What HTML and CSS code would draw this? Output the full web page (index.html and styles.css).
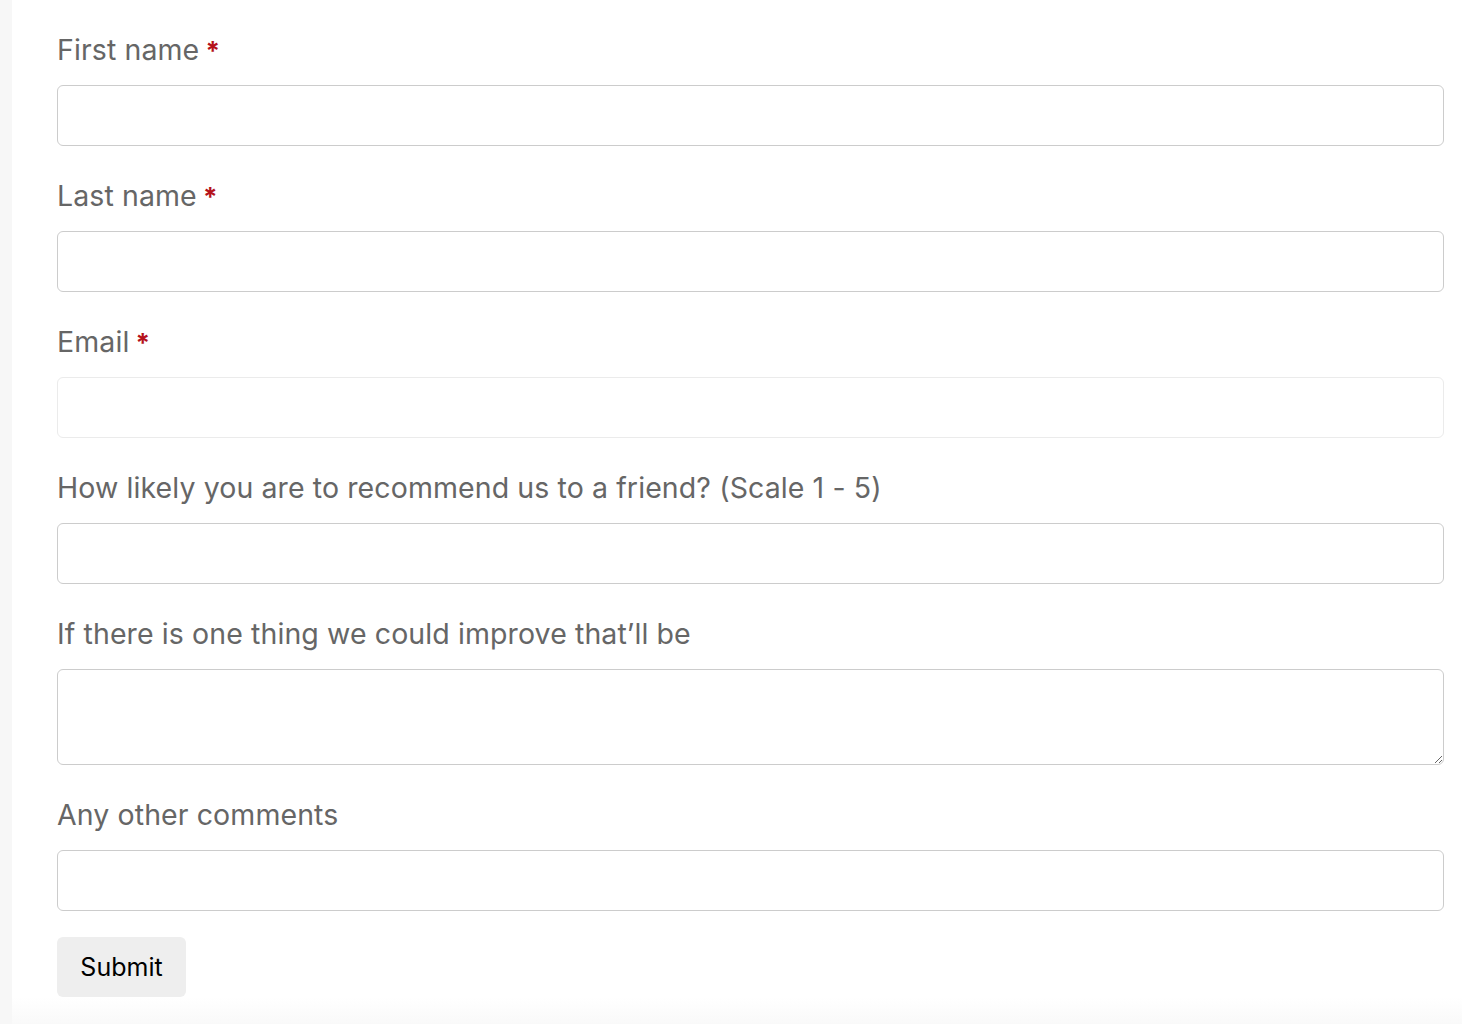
FILE: index.html
```html
<!DOCTYPE html>
<html lang="en">
<head>
<meta charset="utf-8">
<title>Feedback form</title>
<link rel="stylesheet" href="styles.css">
</head>
<body>
<div class="layout">
  <aside class="side"></aside>
  <main class="main">
    <form class="form">
      <div class="field">
        <label class="label">First name <span class="req">*</span></label>
        <input class="input" type="text">
      </div>
      <div class="field">
        <label class="label">Last name <span class="req">*</span></label>
        <input class="input" type="text">
      </div>
      <div class="field">
        <label class="label">Email <span class="req">*</span></label>
        <input class="input input-light" type="email">
      </div>
      <div class="field">
        <label class="label">How likely you are to recommend us to a friend? (Scale 1 - 5)</label>
        <input class="input" type="text">
      </div>
      <div class="field">
        <label class="label">If there is one thing we could improve that’ll be</label>
        <textarea class="input textarea"></textarea>
      </div>
      <div class="field field-last">
        <label class="label">Any other comments</label>
        <input class="input" type="text">
      </div>
      <div class="actions">
        <button class="submit" type="button">Submit</button>
      </div>
    </form>
    <div class="fade"></div>
  </main>
</div>
</body>
</html>
```
FILE: styles.css
```css
html, body {
  margin: 0;
  padding: 0;
  background: #ffffff;
}
body {
  font-family: Inter, "Noto Sans", sans-serif;
}
.layout {
  display: flex;
  min-height: 1024px;
}
.side {
  width: 12px;
  flex: 0 0 12px;
  background: #f7f7f7;
}
.main {
  flex: 1;
  display: flex;
  flex-direction: column;
  padding: 34px 18px 0 45px;
}
.form {
  display: flex;
  flex-direction: column;
}
.field {
  display: flex;
  flex-direction: column;
  margin-bottom: 34px;
}
.field-last {
  margin-bottom: 26px;
}
.label {
  font-size: 28.5px;
  line-height: 32px;
  height: 32px;
  letter-spacing: 0.1px;
  color: #666666;
  margin-bottom: 19px;
}
.req {
  color: #b5121b;
  font-size: 26px;
  font-weight: 700;
  line-height: 1;
  margin-left: -2px;
}
.input {
  box-sizing: border-box;
  height: 61px;
  width: 100%;
  border: 1px solid #cccccc;
  border-radius: 6px;
  background: #ffffff;
  font: inherit;
  margin: 0;
}
.input-light {
  border-color: #ebebeb;
}
.textarea {
  height: 96px;
  resize: vertical;
}
.submit {
  box-sizing: border-box;
  width: 129px;
  height: 60px;
  border: none;
  border-radius: 6px;
  background: #eeeeee;
  color: #000000;
  font-family: Inter, "Noto Sans", sans-serif;
  font-size: 25px;
}
.fade {
  flex: 1;
  margin: 0 -18px 0 -45px;
  background: linear-gradient(#ffffff, #f9f9f9);
  min-height: 28px;
}
```
